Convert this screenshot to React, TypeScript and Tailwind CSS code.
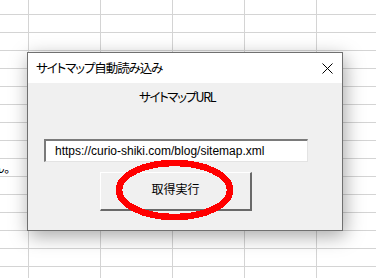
import React from "react";

const COLS = 6;
const ROWS = 16;

const jp = "[font-family:'Noto_Sans_CJK_JP','Noto_Sans',sans-serif] [font-feature-settings:'palt']";

const Sheet = () => (
  <div className="grid grid-cols-[29px_repeat(5,72px)] grid-rows-[15px_repeat(15,18px)]">
    {Array.from({ length: ROWS * COLS }).map((_, i) => {
      const row = Math.floor(i / COLS);
      const col = i % COLS;
      return (
        <div
          key={i}
          className="border-r border-b border-[#d4d4d4] overflow-visible whitespace-nowrap flex items-center"
        >
          {row === 9 && col === 0 && (
            <span className={`ml-[-7px] text-[12px] leading-none text-black ${jp}`}>
              ん。
            </span>
          )}
        </div>
      );
    })}
  </div>
);

const CloseIcon = () => (
  <svg width="11" height="11" viewBox="0 0 11 11" className="block">
    <path d="M0.5 0.5 L10.5 10.5 M10.5 0.5 L0.5 10.5" stroke="#000" strokeWidth="1" />
  </svg>
);

export default function App() {
  return (
    <div className="relative w-[376px] h-[278px] overflow-hidden bg-white">
      <Sheet />

      <div className="absolute left-[27px] top-[52px] w-[316px] h-[179px] border border-[#707070] bg-[#f0f0f0] shadow-[2px_5px_18px_rgba(0,0,0,0.35)] flex flex-col">
        <div className="h-[30px] bg-white flex items-center justify-between pl-[8px] pr-[9px]">
          <span className={`text-[12.5px] tracking-[-1.1px] text-black ${jp}`}>サイトマップ自動読み込み</span>
          <CloseIcon />
        </div>

        <div className="flex flex-col items-start">
          <span className={`mt-[6px] ml-[111px] text-[12.5px] tracking-[-1.4px] leading-[16px] text-black ${jp}`}>
            サイトマップURL
          </span>

          <div className="mt-[34px] ml-[16px] w-[264px] h-[23px] bg-white border-t-2 border-l-2 border-t-[#7a7a7a] border-l-[#7a7a7a] border-r border-b border-r-[#e3e3e3] border-b-[#e3e3e3] flex items-center pl-[9px]">
            <span className="[font-family:'Liberation_Sans',Arial,sans-serif] text-[12px] text-black">
              https://curio-shiki.com/blog/sitemap.xml
            </span>
          </div>

          <button className="mt-[10px] ml-[72px] w-[152px] h-[39px] bg-[#f0f0f0] border-t border-l border-t-white border-l-white border-r-2 border-b-2 border-r-[#696969] border-b-[#696969] flex items-center justify-center pb-[4px]">
            <span className={`text-[12px] text-black ${jp}`}>取得実行</span>
          </button>
        </div>
      </div>

      <svg
        className="absolute left-[113px] top-[157px]"
        width="124"
        height="67"
        viewBox="0 0 124 67"
        shapeRendering="crispEdges"
      >
        <ellipse cx="61.5" cy="33" rx="55.5" ry="27" fill="none" stroke="#ff0000" strokeWidth="6.5" />
      </svg>
    </div>
  );
}
